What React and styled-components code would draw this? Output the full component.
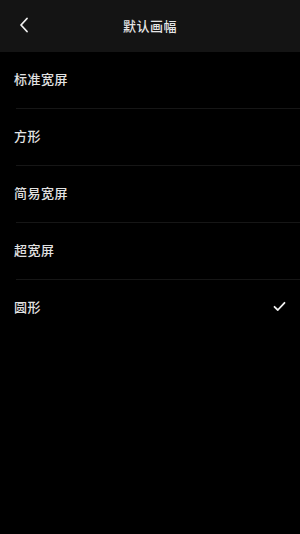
import React from "react";
import styled, { createGlobalStyle } from "styled-components";

const GlobalStyle = createGlobalStyle`
  html, body {
    margin: 0;
    padding: 0;
    background: #000;
  }
  body {
    font-family: "Noto Sans CJK SC", "Noto Sans", sans-serif;
  }
`;

const Page = styled.div`
  width: 300px;
  height: 534px;
  background: #000;
  display: flex;
  flex-direction: column;
`;

const Header = styled.div`
  height: 52px;
  background: #141414;
  display: grid;
  grid-template-columns: 52px 1fr 52px;
  align-items: center;
`;

const BackButton = styled.div`
  display: flex;
  align-items: center;
  padding-left: 18px;
  padding-bottom: 2px;
  height: 100%;
`;

const Title = styled.div`
  text-align: center;
  color: #e6e6e6;
  font-size: 13px;
  font-weight: 500;
  letter-spacing: 0.5px;
  padding-bottom: 2px;
`;

const List = styled.div`
  display: flex;
  flex-direction: column;
`;

const Row = styled.div`
  position: relative;
  height: 57px;
  box-sizing: border-box;
  display: flex;
  align-items: center;
  justify-content: space-between;
  padding: 0 14px 5px 14px;

  &::after {
    content: "";
    display: ${(p) => (p.$last ? "none" : "block")};
    position: absolute;
    left: 16px;
    right: 0;
    bottom: 0;
    height: 1px;
    background: #161616;
  }
`;

const Label = styled.span`
  color: #e2e2e2;
  font-size: 13px;
  font-weight: 500;
  letter-spacing: 0.5px;
`;

const Check = () => (
  <svg width="13" height="11" viewBox="0 0 13 11">
    <path d="M1.5 5.8 L4.8 9 L11.5 1.8" fill="none" stroke="#f0f0f0" strokeWidth="1.8" strokeLinecap="round" strokeLinejoin="round" />
  </svg>
);

const items = ["标准宽屏", "方形", "简易宽屏", "超宽屏", "圆形"];
const selected = "圆形";

export default function App() {
  return (
    <Page>
      <GlobalStyle />
      <Header>
        <BackButton>
          <svg width="12" height="16" viewBox="0 0 12 16">
            <path d="M9 1.5 L3 8 L9 14.5" fill="none" stroke="#f0f0f0" strokeWidth="1.8" strokeLinecap="round" strokeLinejoin="round" />
          </svg>
        </BackButton>
        <Title>默认画幅</Title>
        <div />
      </Header>
      <List>
        {items.map((item, i) => (
          <Row key={item} $last={i === items.length - 1}>
            <Label>{item}</Label>
            {item === selected && <Check />}
          </Row>
        ))}
      </List>
    </Page>
  );
}
